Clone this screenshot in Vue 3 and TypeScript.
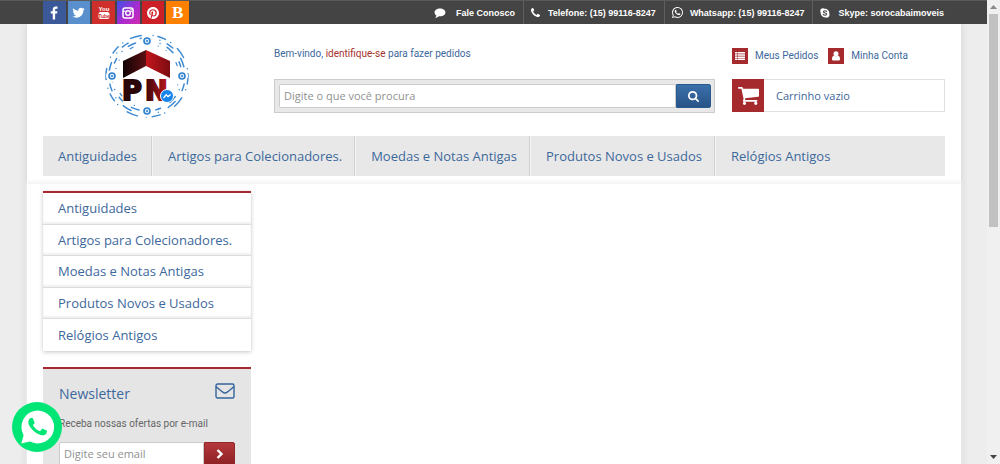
<script setup lang="ts">
import { ref } from 'vue'

interface Contact {
  icon: 'chat' | 'phone' | 'whatsapp' | 'skype'
  label: string
}

const contacts: Contact[] = [
  { icon: 'chat', label: 'Fale Conosco' },
  { icon: 'phone', label: 'Telefone: (15) 99116-8247' },
  { icon: 'whatsapp', label: 'Whatsapp: (15) 99116-8247' },
  { icon: 'skype', label: 'Skype: sorocabaimoveis' },
]

const categories: string[] = [
  'Antiguidades',
  'Artigos para Colecionadores.',
  'Moedas e Notas Antigas',
  'Produtos Novos e Usados',
  'Relógios Antigos',
]

const search = ref('')
const email = ref('')

const whatsappPath =
  'M17.472 14.382c-.297-.149-1.758-.867-2.03-.967-.273-.099-.471-.148-.67.15-.197.297-.767.966-.94 1.164-.173.199-.347.223-.644.075-.297-.15-1.255-.463-2.39-1.475-.883-.788-1.48-1.761-1.653-2.059-.173-.297-.018-.458.13-.606.134-.133.298-.347.446-.52.149-.174.198-.298.298-.497.099-.198.05-.371-.025-.52-.075-.149-.669-1.612-.916-2.207-.242-.579-.487-.5-.669-.51-.173-.008-.371-.01-.57-.01-.198 0-.52.074-.792.372-.272.297-1.04 1.016-1.04 2.479 0 1.462 1.065 2.875 1.213 3.074.149.198 2.096 3.2 5.077 4.487.709.306 1.262.489 1.694.625.712.227 1.36.195 1.871.118.571-.085 1.758-.719 2.006-1.413.248-.694.248-1.289.173-1.413-.074-.124-.272-.198-.57-.347m-5.421 7.403h-.004a9.87 9.87 0 01-5.031-1.378l-.361-.214-3.741.982.998-3.648-.235-.374a9.86 9.86 0 01-1.51-5.26c.001-5.45 4.436-9.884 9.888-9.884 2.64 0 5.122 1.03 6.988 2.898a9.825 9.825 0 012.893 6.994c-.003 5.45-4.437 9.884-9.885 9.884m8.413-18.297A11.815 11.815 0 0012.05 0C5.495 0 .16 5.335.157 11.892c0 2.096.547 4.142 1.588 5.945L.057 24l6.305-1.654a11.882 11.882 0 005.683 1.448h.005c6.554 0 11.89-5.335 11.893-11.893a11.821 11.821 0 00-3.48-8.413z'

const handsetPath = whatsappPath.slice(0, whatsappPath.indexOf('m-5.421')) + 'z'
</script>

<template>
  <div class="viewport">
    <div class="page">
      <div class="topbar">
        <nav class="social" aria-label="Redes sociais">
          <a class="facebook" href="#" aria-label="Facebook">
            <svg width="8" height="14" viewBox="0 0 1024 1664"><path fill="#fff" d="M959 12v264h-157q-86 0-116 36t-30 108v189h293l-39 296h-254v759h-306v-759h-255v-296h255v-218q0-186 104-288.5t277-102.5q147 0 228 12z" /></svg>
          </a>
          <a class="twitter" href="#" aria-label="Twitter">
            <svg width="13" height="12" viewBox="0 170 1664 1536"><path fill="#fff" d="M1620 408q-67 98-162 167 1 14 1 42 0 130-38 259.5t-115.5 248.5-184.5 210.5-258 146-323 54.5q-271 0-496-145 35 4 78 4 225 0 401-138-105-2-188-64.5t-114-159.5q33 5 61 5 43 0 85-11-112-23-185.5-111.5t-73.5-205.5v-4q68 38 146 41-66-44-105-115t-39-154q0-88 44-163 121 149 294.5 238.5t371.5 99.5q-8-38-8-74 0-134 94.5-228.5t228.5-94.5q140 0 236 102 109-21 205-78-37 115-142 178 93-10 186-50z" /></svg>
          </a>
          <a class="youtube" href="#" aria-label="YouTube">
            <svg width="12" height="14" viewBox="0 0 12 14">
              <text x="6" y="5" text-anchor="middle" font-family="Liberation Sans, sans-serif" font-size="6" font-weight="700" fill="#fff">You</text>
              <rect x="0.500" y="6" width="11" height="7" rx="2" fill="#fff" />
              <text x="6" y="11.500" text-anchor="middle" font-family="Liberation Sans, sans-serif" font-size="5" font-weight="700" fill="#cf2f2c">Tube</text>
            </svg>
          </a>
          <a class="instagram" href="#" aria-label="Instagram">
            <svg width="12" height="12" viewBox="0 0 12 12" fill="none" stroke="#fff">
              <rect x="1" y="1" width="10" height="10" rx="2" stroke-width="1.5" />
              <path d="M1 4.2h2.6M8.4 4.2H11" />
              <circle cx="6" cy="6" r="2.3" stroke-width="1.4" />
              <rect x="8.4" y="2" width="1.2" height="1.2" fill="#fff" stroke="none" />
            </svg>
          </a>
          <a class="pinterest" href="#" aria-label="Pinterest">
            <svg width="12" height="12" viewBox="0 0 24 24"><path fill="#fff" d="M12 0C5.373 0 0 5.372 0 12c0 5.084 3.163 9.426 7.627 11.174-.105-.949-.2-2.405.042-3.441.218-.937 1.407-5.965 1.407-5.965s-.359-.719-.359-1.782c0-1.668.967-2.914 2.171-2.914 1.023 0 1.518.769 1.518 1.69 0 1.029-.655 2.568-.994 3.995-.283 1.194.599 2.169 1.777 2.169 2.133 0 3.772-2.249 3.772-5.495 0-2.873-2.064-4.882-5.012-4.882-3.414 0-5.418 2.561-5.418 5.207 0 1.031.397 2.138.893 2.738a.36.36 0 01.083.345l-.333 1.36c-.053.22-.174.267-.402.161-1.499-.698-2.436-2.889-2.436-4.649 0-3.785 2.75-7.262 7.929-7.262 4.163 0 7.398 2.967 7.398 6.931 0 4.136-2.607 7.464-6.227 7.464-1.216 0-2.359-.631-2.75-1.378l-.748 2.853c-.271 1.043-1.002 2.35-1.492 3.146C9.57 23.812 10.763 24 12 24c6.627 0 12-5.373 12-12S18.627 0 12 0z" /></svg>
          </a>
          <a class="blogger" href="#">B</a>
        </nav>
        <ul class="contacts">
          <li v-for="contact in contacts" :key="contact.label">
            <svg v-if="contact.icon === 'chat'" width="12" height="10" viewBox="0 0 12 10"><path fill="#fff" d="M6 0.5c3 0 5.4 1.7 5.4 3.9S9 8.3 6 8.3l-1-.1C4 9.1 2.600 9.700 1.100 9.800c.7-.6 1.200-1.400 1.300-2.300C1.300 6.800.6 5.700.6 4.400.6 2.200 3 .5 6 .5z" /></svg>
            <svg v-else-if="contact.icon === 'phone'" width="9" height="9" viewBox="0 256 1408 1408"><path fill="#fff" d="M1408 1368q0 27-10 70.500t-21 68.500q-21 50-122 106-94 51-186 51-27 0-52.500-3.500t-57.500-12.500-47.500-14.500-55.500-20.500-49-18q-98-35-175-83-128-79-264.500-215.500t-215.500-264.500q-48-77-83-175-3-9-18-49t-20.500-55.500-14.500-47.500-12.500-57.500-3.500-52.500q0-92 51-186 56-101 106-122 25-11 68.500-21t70.500-10q14 0 21 3 18 6 53 76 11 19 30 54t35 63.500 31 53.500q3 4 17.500 25t21.500 35.500 7 28.500q0 20-28.500 50t-62 55-62 53-28.500 46q0 9 5 22.500t8.500 20.500 14 24 11.500 19q76 137 174 235t235 174q2 1 19 11.500t24 14 20.500 8.500 22.500 5q18 0 46-28.500t53-62 55-62 50-28.500q14 0 28.500 7t35.500 21.500 25 17.500q25 15 53.500 31t63.500 35 54 30q70 35 76 53 3 7 3 21z" /></svg>
            <svg v-else-if="contact.icon === 'whatsapp'" width="11" height="11" viewBox="0 0 24 24"><path fill="#fff" :d="whatsappPath" /></svg>
            <svg v-else width="10" height="10" viewBox="0 0 20 20">
              <path fill="#fff" d="M6 .5c1.400 0 2.400.4 3.300 1a8.800 8.800 0 0 1 9.200 10.200A5.500 5.500 0 0 1 11 18.700 8.800 8.800 0 0 1 1.400 8.600 5.300 5.300 0 0 1 6 .5z" />
              <path fill="none" stroke="#444" stroke-width="2.200" stroke-linecap="round" d="M13.200 7.200C12.500 5.900 11.400 5.500 10 5.500c-1.800 0-3.200.8-3.200 2.200 0 3 6.600 1.400 6.600 4.500 0 1.600-1.600 2.400-3.400 2.400-1.600 0-2.900-.6-3.500-1.900" />
            </svg>
            <a href="#">{{ contact.label }}</a>
          </li>
        </ul>
      </div>

      <div class="sheet">
        <header class="header">
          <a class="logo" href="#" aria-label="PN">
            <svg width="88" height="88" viewBox="0 0 88 88">
              <defs>
                <linearGradient id="roofLeft"><stop offset="0" stop-color="#100304" /><stop offset="1" stop-color="#5d0f13" /></linearGradient>
                <linearGradient id="roofRight"><stop offset="0" stop-color="#c5151d" /><stop offset="1" stop-color="#7c0d12" /></linearGradient>
                <linearGradient id="letterN"><stop offset="0" stop-color="#3a0709" /><stop offset="1" stop-color="#bb161c" /></linearGradient>
              </defs>
              <g fill="none" stroke="#3f8bd2" stroke-width="1.500" stroke-linecap="round">
                <circle cx="43" cy="45" r="41" stroke-dasharray="8 6 0 9 11 12 0 5" />
                <circle cx="43" cy="45" r="38" stroke-dasharray="0 8 7 13 9 11" />
                <circle cx="43" cy="45" r="35" stroke-dasharray="5 9 0 8 8 11" />
                <circle cx="43" cy="45" r="32" stroke-dasharray="0 9 0 16 3 26" stroke-width="1.300" />
              </g>
              <g fill="#fff">
                <circle cx="43" cy="10" r="6" /><circle cx="8" cy="45" r="6" /><circle cx="78" cy="45" r="6" /><circle cx="43" cy="80" r="6" />
              </g>
              <g fill="#dcecf9" stroke="#2f80cd" stroke-width="1.600">
                <circle cx="43" cy="10" r="3" /><circle cx="8" cy="45" r="3" /><circle cx="78" cy="45" r="3" /><circle cx="43" cy="80" r="3" />
              </g>
              <g fill="#2f80cd">
                <circle cx="43" cy="10" r="1" /><circle cx="8" cy="45" r="1" /><circle cx="78" cy="45" r="1" /><circle cx="43" cy="80" r="1" />
              </g>
              <path fill="url(#roofLeft)" d="M19 30 42 19V35L19 47z" />
              <path fill="url(#roofRight)" d="M42 19 66 30V47L42 35z" />
              <g font-family="DejaVu Sans, sans-serif" font-size="27" font-weight="700" stroke-width="2">
                <text x="18" y="69" fill="#2a0608" stroke="#2a0608">P</text>
                <text x="41" y="69" fill="url(#letterN)" stroke="url(#letterN)">N</text>
              </g>
              <circle cx="63" cy="65" r="6.500" fill="#1785ee" stroke="#fff" />
              <path d="M59.500 67 62.200 63.800 64 65.600 66.700 63.400" fill="none" stroke="#fff" stroke-width="1.300" />
            </svg>
          </a>

          <p class="welcome">Bem-vindo, <a href="#">identifique-se</a> para fazer pedidos</p>

          <div class="account">
            <a href="#">
              <span class="badge"><svg width="10" height="8" viewBox="0 0 10 8" fill="#fff"><path d="M0 0h2v1.500H0zM2.500 0H10v1.500H2.500zM0 2.200h2v1.500H0zM2.500 2.200H10v1.500H2.500zM0 4.400h2v1.500H0zM2.500 4.400H10v1.500H2.500zM0 6.500h2V8H0zM2.500 6.500H10V8H2.500z" /></svg></span>
              Meus Pedidos
            </a>
            <a href="#">
              <span class="badge"><svg width="8" height="10" viewBox="0 0 8 10" fill="#fff"><circle cx="4" cy="2.800" r="2.500" /><path d="M2 4.500C.6 4.700 0 6.200 0 8c0 1 .6 1.500 1.500 1.500h5C7.400 9.500 8 9 8 8c0-1.800-.6-3.300-2-3.500-1.200 1-2.800 1-4 0z" /></svg></span>
              Minha Conta
            </a>
          </div>

          <form class="search" @submit.prevent>
            <input v-model="search" type="text" aria-label="Busca" placeholder="Digite o que você procura">
            <button type="submit" aria-label="Buscar">
              <svg width="11" height="11" viewBox="0 128 1664 1664"><path fill="#fff" d="M1152 832q0-185-131.500-316.500t-316.500-131.500-316.500 131.500-131.500 316.500 131.500 316.500 316.500 131.500 316.500-131.500 131.500-316.500zm512 832q0 52-38 90t-90 38q-54 0-90-38l-343-342q-179 124-399 124-143 0-273.500-55.500t-225-150-150-225-55.500-273.500 55.500-273.500 150-225 225-150 273.500-55.500 273.500 55.500 225 150 150 225 55.500 273.500q0 220-124 399l343 343q37 37 37 90z" /></svg>
            </button>
          </form>

          <a class="cart" href="#">
            <span class="cart-icon">
              <svg width="21" height="18" viewBox="0 256 1664 1408"><path fill="#fff" d="M640 1536q0 52-38 90t-90 38-90-38-38-90 38-90 90-38 90 38 38 90zm896 0q0 52-38 90t-90 38-90-38-38-90 38-90 90-38 90 38 38 90zm128-1088v512q0 24-16.500 42.500t-40.500 21.500l-1044 122q13 60 13 70 0 16-24 64h920q26 0 45 19t19 45-19 45-45 19h-1024q-26 0-45-19t-19-45q0-11 8-31.500t16-36 21.500-40 15.500-29.500l-177-823h-204q-26 0-45-19t-19-45 19-45 45-19h256q16 0 28.500 6.500t19.500 15.500 13 24.500 8 26 5.500 29.500 4.500 26h1201q26 0 45 19t19 45z" /></svg>
            </span>
            Carrinho vazio
          </a>
        </header>

        <nav class="menu" aria-label="Categorias">
          <a v-for="category in categories" :key="category" href="#">{{ category }}</a>
        </nav>

        <main class="body">
          <aside class="sidebar">
            <ul class="side-menu">
              <li v-for="category in categories" :key="category"><a href="#">{{ category }}</a></li>
            </ul>

            <section class="newsletter">
              <div class="newsletter-head">
                <h2>Newsletter</h2>
                <svg width="20" height="16" viewBox="0 0 20 16" fill="none" stroke="#36649c" stroke-width="1.400">
                  <rect x="1" y="1" width="18" height="14" rx="1.500" />
                  <path d="M1 3.500c2 2 4.500 3.800 6.500 5.400 1.700 1.400 3.300 1.400 5 0 2-1.600 4.500-3.400 6.500-5.400" />
                </svg>
              </div>
              <p>Receba nossas ofertas por e-mail</p>
              <form @submit.prevent>
                <input v-model="email" type="text" aria-label="E-mail" placeholder="Digite seu email">
                <button type="submit" aria-label="Assinar">
                  <svg width="8" height="10" viewBox="0 0 8 10"><path d="M1.500 1 5.500 5l-4 4" fill="none" stroke="#fff" stroke-width="2.400" /></svg>
                </button>
              </form>
            </section>
          </aside>
        </main>
      </div>
    </div>

    <div class="scrollbar" aria-hidden="true">
      <svg width="7" height="4" viewBox="0 0 7 4"><path d="M0 4 3.500 0 7 4z" fill="#888" /></svg>
      <div class="thumb"></div>
      <svg width="7" height="4" viewBox="0 0 7 4"><path d="M0 0h7L3.500 4z" fill="#444" /></svg>
    </div>

    <a class="float" href="#" aria-label="WhatsApp">
      <svg width="50" height="50" viewBox="0 0 50 50">
        <circle cx="25" cy="25" r="25" fill="#00e676" />
        <path fill="#fff" d="M25.500 8.500a16.500 16.500 0 1 1-7.600 31.100L9.300 41.500l2.300-8.300A16.500 16.500 0 0 1 25.500 8.500z" />
        <path fill="#00e676" transform="translate(7 6) scale(1.550)" :d="handsetPath" />
      </svg>
    </a>
  </div>
</template>

<style>
body {
  margin: 0;
}
</style>

<style scoped>
.viewport {
  display: grid;
  grid-template-columns: minmax(0, 1fr) 13px;
  height: 100vh;
  overflow: hidden;
  font-family: Roboto, "Liberation Sans", sans-serif;
  font-size: 10px;
  color: #3d689c;
  background: #ededed;
}
.viewport * {
  box-sizing: border-box;
}
a {
  color: inherit;
  text-decoration: none;
}
ul {
  list-style: none;
  margin: 0;
  padding: 0;
}
svg {
  display: block;
  flex: none;
}
.page {
  display: flex;
  flex-direction: column;
  min-width: 0;
  overflow: hidden;
}
.topbar {
  display: flex;
  justify-content: space-between;
  flex: none;
  z-index: 1;
  height: 24px;
  padding: 0 43px;
  background: #444;
  border-top: 1px solid #5a5a5a;
}
.social {
  display: grid;
  grid-template-columns: repeat(6, 1fr);
  gap: 2px;
  width: 146px;
}
.social a {
  display: flex;
  align-items: center;
  justify-content: center;
}
.facebook { background: #3b5998; }
.twitter { background: #5a8fce; }
.youtube { background: #cf2f2c; }
.instagram { background: linear-gradient(135deg, #3f51e8, #a92bd0 55%, #d02bb0); }
.pinterest { background: #cb2027; }
.blogger {
  background: #ff8000;
  color: #fff;
  font: 700 17px/20px "Liberation Serif", serif;
}
.contacts {
  display: flex;
  color: #fff;
  font-family: "Liberation Sans", Arial, sans-serif;
  font-size: 9px;
  font-weight: 700;
}
.contacts li {
  display: flex;
  align-items: center;
  gap: 7px;
  padding: 0 8px 0 7px;
  border-left: 1px solid #606060;
}
.contacts li:first-child {
  border-left: 0;
  gap: 10px;
}
.contacts li:nth-child(2),
.contacts li:last-child {
  gap: 8px;
}
.contacts li:last-child {
  padding-right: 0;
}
.sheet {
  flex: 1 0 auto;
  margin: 0 26px 0 27px;
  background: #fff;
  box-shadow: 0 0 8px #d0d0d0;
}
.header {
  display: grid;
  grid-template-columns: 214px minmax(0, 1fr) 213px;
  grid-template-rows: 55px 34px;
  column-gap: 17px;
  padding: 0 16px;
}
.logo {
  grid-row: 1 / 3;
  justify-self: center;
  padding: 7px 4px 0 0;
}
.welcome {
  align-self: center;
  margin: 0;
  padding-top: 4px;
}
.welcome a {
  color: #a5302d;
}
.account {
  display: flex;
  align-items: center;
  gap: 10px;
  padding-top: 8px;
}
.account a {
  display: flex;
  align-items: center;
  gap: 7px;
}
.badge {
  display: flex;
  align-items: center;
  justify-content: center;
  width: 16px;
  height: 16px;
  background: #a42a2d;
}
.search {
  grid-column: 2;
  display: flex;
  padding: 4px 3px 4px 4px;
  border: 1px solid #ccc;
  background: #e8e8e8;
}
input {
  flex: 1;
  min-width: 0;
  margin: 0;
  padding: 0 4px;
  border: 1px solid #ccc;
  border-radius: 2px 0 0 2px;
  background: #fff;
  font: 11px/16px "Open Sans", sans-serif;
  color: #555;
}
input::placeholder {
  color: #919191;
  opacity: 1;
}
button {
  display: flex;
  align-items: center;
  justify-content: center;
  margin: 0;
  padding: 0;
  border: 1px solid #2b5a8f;
  border-radius: 0 2px 2px 0;
}
.search button {
  width: 35px;
  background: linear-gradient(#3b70aa, #285488);
}
.cart {
  display: flex;
  align-items: center;
  gap: 12px;
  height: 33px;
  border: 1px solid #e0e0e0;
  font: 11px/16px "Open Sans", sans-serif;
}
.cart-icon {
  display: flex;
  align-items: center;
  justify-content: center;
  align-self: stretch;
  width: 32px;
  margin: -1px 0 -1px -1px;
  background: #a42a2d;
}
.menu {
  display: flex;
  margin: 23px 16px 0;
  background: #e8e8e8;
  font: 13px/40px "Open Sans", sans-serif;
}
.menu a {
  padding: 0 12px 0 16px;
  border-right: 1px solid #d2d2d2;
  box-shadow: 1px 0 #f4f4f4;
}
.menu a:first-child {
  padding: 0 14px 0 15px;
}
.menu a:last-child {
  border-right: 0;
  box-shadow: none;
}
.body {
  margin-top: 8px;
  padding: 7px 16px 0;
  box-shadow: 0 -3px 3px #f5f5f5;
}
.sidebar {
  width: 208px;
}
.side-menu {
  display: grid;
  grid-auto-rows: 1fr;
  min-height: 160px;
  border-top: 2px solid #a42a2d;
  box-shadow: 0 1px 4px #c4c4c4;
  font: 13px/20px "Open Sans", sans-serif;
}
.side-menu li {
  display: flex;
  align-items: center;
  padding: 0 15px;
  border-bottom: 1px solid #dcdcdc;
  box-shadow: inset 0 -2px 2px #f0f0f0;
}
.side-menu li:last-child {
  border-bottom: 0;
  box-shadow: none;
}
.newsletter {
  margin-top: 16px;
  padding: 14px 16px 20px;
  border-top: 2px solid #a42a2d;
  background: #e5e5e5;
}
.newsletter-head {
  display: flex;
  justify-content: space-between;
}
.newsletter h2 {
  margin: 0;
  font: 14px/22px "Open Sans", sans-serif;
}
.newsletter p {
  margin: 12px 0 11px;
  line-height: 14px;
  color: #666;
}
.newsletter form {
  display: flex;
  height: 24px;
}
.newsletter button {
  width: 31px;
  border-color: #93272a;
  background: linear-gradient(#b5383b, #8c2023);
}
.scrollbar {
  display: flex;
  flex-direction: column;
  align-items: center;
  justify-content: space-between;
  padding: 5px 0;
  background: #f0f0f0;
}
.thumb {
  width: 9px;
  height: 47%;
  margin: 5px 0 auto;
  background: #c1c1c1;
}
.float {
  position: fixed;
  left: 12px;
  bottom: 12px;
}
</style>
